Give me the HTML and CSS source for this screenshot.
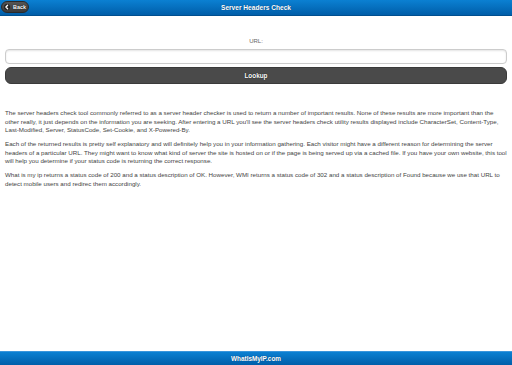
FILE: index.html
```html
<!DOCTYPE html>
<html>
<head>
    <title>Server Headers Check</title>
    <link rel="stylesheet" href="styles.css">
</head>
<body>
    <div class="page">
        <div class="header">
            <a class="back-btn" href="#">
                <span class="back-icon">
                    <svg width="6" height="6" viewBox="0 0 6 6"><path d="M3.6 1.2 L1.9 3 L3.6 4.8" fill="none" stroke="#fff" stroke-width="1.3" stroke-linecap="round" stroke-linejoin="round"/></svg>
                </span>
                Back
            </a>
            <h1>Server Headers Check</h1>
        </div>

        <div class="content">
            <form class="lookup-form">
                <label for="url">URL:</label>
                <input type="text" id="url" class="url-input">
                <button type="button" class="lookup-btn">Lookup</button>
            </form>

            <div class="info">
                <p>The server headers check tool commonly referred to as a server header checker is used to return a number of important results. None of these results are more important than the other really, it just depends on the information you are seeking. After entering a URL you'll see the server headers check utility results displayed include CharacterSet, Content-Type, Last-Modified, Server, StatusCode, Set-Cookie, and X-Powered-By.</p>
                <p>Each of the returned results is pretty self explanatory and will definitely help you in your information gathering. Each visitor might have a different reason for determining the server headers of a particular URL. They might want to know what kind of server the site is hosted on or if the page is being served up via a cached file. If you have your own website, this tool will help you determine if your status code is returning the correct response.</p>
                <p>What is my ip returns a status code of 200 and a status description of OK. However, WMI returns a status code of 302 and a status description of Found because we use that URL to detect mobile users and redirec them accordingly.</p>
            </div>
        </div>

        <div class="footer">WhatIsMyIP.com</div>
    </div>
</body>
</html>
```

FILE: styles.css
```css
body { margin: 0; font-family: "Liberation Sans", Arial, sans-serif; background: #fff; }
.page { display: flex; flex-direction: column; min-height: 100vh; }

.header { position: relative; height: 15px; background: linear-gradient(#0b80d2, #005ea9); border-bottom: 1px solid #004f8f; display: flex; align-items: center; justify-content: center; }
.header h1 { margin: 0; font-size: 6.6px; font-weight: bold; color: #fff; text-shadow: 0 0 1px #003b6b; }
.back-btn { position: absolute; left: 1px; top: 1px; height: 12px; width: 28px; box-sizing: border-box; display: flex; align-items: center; gap: 3px; padding-left: 2px; background: linear-gradient(#555, #3a3a3a); border: 1px solid #2a2a2a; border-radius: 7px; color: #fff; font-size: 5.4px; font-weight: bold; text-decoration: none; text-shadow: 0 0 1px #000; }
.back-icon { width: 6px; height: 6px; border-radius: 50%; background: #222; display: flex; }

.content { flex: 1; padding: 0 5px; }
.lookup-form { display: flex; flex-direction: column; padding-top: 22px; }
.lookup-form label { text-align: center; font-size: 6px; color: #666; height: 11px; }
.url-input { height: 15px; box-sizing: border-box; margin: 0; border: 1px solid #ccc; border-radius: 4px; box-shadow: inset 0 1px 2px #e4e4e4; background: #fff; }
.lookup-btn { margin-top: 3px; height: 17px; border: 1px solid #3a3a3a; border-radius: 6px; background: #4a4a4a; color: #fff; font-family: "Liberation Sans", Arial, sans-serif; font-size: 6.4px; font-weight: bold; text-shadow: 0 0 1px #000; cursor: pointer; }

.info { padding-top: 25px; color: #444; font-size: 6.2px; line-height: 8.5px; }
.info p { margin: 0 0 5.5px 0; }

.footer { height: 13px; background: linear-gradient(#0b80d2, #005ea9); border-top: 1px solid #3a95db; color: #fff; font-size: 6.4px; font-weight: bold; text-align: center; line-height: 14px; text-shadow: 0 0 1px #003b6b; }
```
